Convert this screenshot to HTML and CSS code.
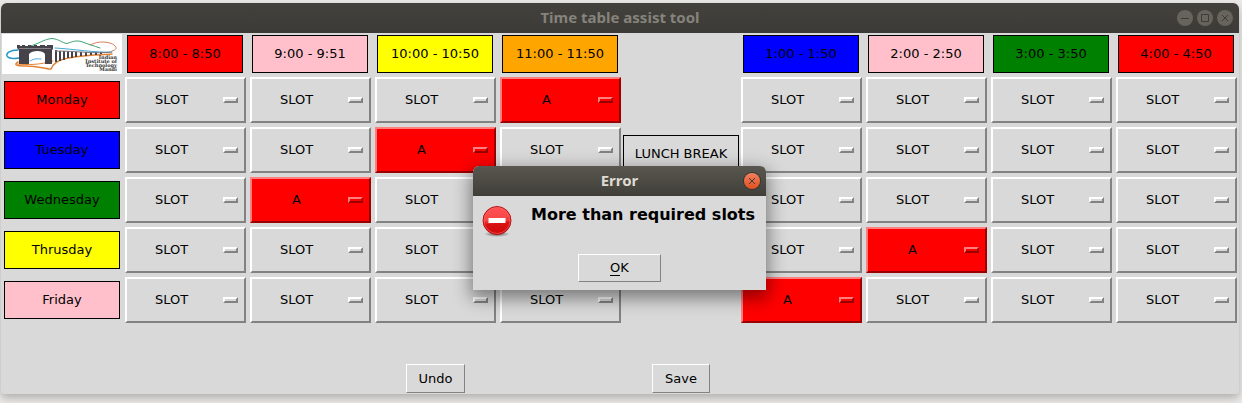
FILE: index.html
```html
<!DOCTYPE html>
<html lang="en">
<head>
<meta charset="utf-8">
<title>Time table assist tool</title>
<link rel="stylesheet" href="styles.css">
</head>
<body>
<main class="window">
  <header class="titlebar">
    <h1 class="title">Time table assist tool</h1>
    <div class="controls">
      <button class="control" aria-label="Minimize"><svg viewBox="0 0 16 16"><path d="M4 8.500h8"/></svg></button>
      <button class="control" aria-label="Maximize"><svg viewBox="0 0 16 16"><path d="M4.500 4.500h7v7h-7z"/></svg></button>
      <button class="control" aria-label="Close"><svg viewBox="0 0 16 16"><path d="M5 5l6 6M11 5l-6 6"/></svg></button>
    </div>
  </header>

  <table class="timetable">
    <colgroup><col class="col-day"><col span="4" class="col-slot"><col class="col-lunch"><col span="4" class="col-slot"></colgroup>
    <thead>
      <tr>
        <td class="logo-cell">
          <svg class="logo" viewBox="0 0 120 40" preserveAspectRatio="none" role="img" aria-label="Indian Institute of Technology Mandi">
            <rect width="120" height="40" fill="#fff"/>
            <g fill="none" stroke-linecap="round">
              <path d="M28 12C37 10 42 5 50 4.500C57 5 60 9 65 9.500C70 8 73 6 79 7.500C86 10 92 12 98 14" stroke="#3da374" stroke-width="1"/>
              <path d="M88 11C97 6 108 8 112 11C116 14 114 16 110 17" stroke="#d9805f" stroke-width="1"/>
              <path d="M16 16C8 16 4 19 5 22C6 24 11 25 17 24" stroke="#2496c8" stroke-width="1.500"/>
              <path d="M53 14C72 15 94 19 110 18M28 27C33 24 35 25 39 25" stroke="#48a8d3" stroke-width="1"/>
              <path d="M16 28C11 31 15 32 24 32C34 32 46 35 49 35C51 30 54 27 62 25C76 21 99 21 110 20" stroke="#e38435" stroke-width="1.500"/>
              <path d="M15 30C25 31 38 31 51 27" stroke="#e38435" stroke-width="1"/>
            </g>
            <path fill="#464249" d="M15 11h3v1h2v-1h3v1h3v-1h3v1h3v-1h3v1h3v-1h5v1h2v-1h6v4l-1 1v14H43V20c-2-4-13-4-16 0v10H17V16l-2-2z"/>
            <path d="M17 14.500h32" stroke="#88838a" stroke-width="1" fill="none"/>
            <path d="M54 16v12M58 17v10M62 17v9M66 17v7M70 18v6M74 18v5M79 18v4M84 18v4M89 18v3M94 18v3M99 18v2" stroke="#464249" stroke-width="2" fill="none"/>
            <path d="M53 17C75 17 94 20 110 18" stroke="#77747c" fill="none"/>
            <g class="logo-text" text-anchor="end"><text x="115" y="25">Indian</text><text x="115" y="29">Institute of</text><text x="115" y="33">Technology</text><text x="115" y="37">Mandi</text></g>
          </svg>
        </td>
        <th scope="col"><div class="tag red">8:00 - 8:50</div></th>
        <th scope="col"><div class="tag pink">9:00 - 9:51</div></th>
        <th scope="col"><div class="tag yellow">10:00 - 10:50</div></th>
        <th scope="col"><div class="tag orange">11:00 - 11:50</div></th>
        <td></td>
        <th scope="col"><div class="tag blue">1:00 - 1:50</div></th>
        <th scope="col"><div class="tag pink">2:00 - 2:50</div></th>
        <th scope="col"><div class="tag green">3:00 - 3:50</div></th>
        <th scope="col"><div class="tag red">4:00 - 4:50</div></th>
      </tr>
    </thead>
    <tbody>
      <tr>
        <th scope="row"><div class="tag red">Monday</div></th>
        <td><label class="slot"><select aria-label="Monday 8:00"><option>SLOT</option></select></label></td>
        <td><label class="slot"><select aria-label="Monday 9:00"><option>SLOT</option></select></label></td>
        <td><label class="slot"><select aria-label="Monday 10:00"><option>SLOT</option></select></label></td>
        <td><label class="slot taken"><select aria-label="Monday 11:00"><option>A</option></select></label></td>
        <td class="lunch" rowspan="5"><div class="tag">LUNCH BREAK</div></td>
        <td><label class="slot"><select aria-label="Monday 1:00"><option>SLOT</option></select></label></td>
        <td><label class="slot"><select aria-label="Monday 2:00"><option>SLOT</option></select></label></td>
        <td><label class="slot"><select aria-label="Monday 3:00"><option>SLOT</option></select></label></td>
        <td><label class="slot"><select aria-label="Monday 4:00"><option>SLOT</option></select></label></td>
      </tr>
      <tr>
        <th scope="row"><div class="tag blue">Tuesday</div></th>
        <td><label class="slot"><select aria-label="Tuesday 8:00"><option>SLOT</option></select></label></td>
        <td><label class="slot"><select aria-label="Tuesday 9:00"><option>SLOT</option></select></label></td>
        <td><label class="slot taken"><select aria-label="Tuesday 10:00"><option>A</option></select></label></td>
        <td><label class="slot"><select aria-label="Tuesday 11:00"><option>SLOT</option></select></label></td>
        <td><label class="slot"><select aria-label="Tuesday 1:00"><option>SLOT</option></select></label></td>
        <td><label class="slot"><select aria-label="Tuesday 2:00"><option>SLOT</option></select></label></td>
        <td><label class="slot"><select aria-label="Tuesday 3:00"><option>SLOT</option></select></label></td>
        <td><label class="slot"><select aria-label="Tuesday 4:00"><option>SLOT</option></select></label></td>
      </tr>
      <tr>
        <th scope="row"><div class="tag green">Wednesday</div></th>
        <td><label class="slot"><select aria-label="Wednesday 8:00"><option>SLOT</option></select></label></td>
        <td><label class="slot taken"><select aria-label="Wednesday 9:00"><option>A</option></select></label></td>
        <td><label class="slot"><select aria-label="Wednesday 10:00"><option>SLOT</option></select></label></td>
        <td><label class="slot"><select aria-label="Wednesday 11:00"><option>SLOT</option></select></label></td>
        <td><label class="slot"><select aria-label="Wednesday 1:00"><option>SLOT</option></select></label></td>
        <td><label class="slot"><select aria-label="Wednesday 2:00"><option>SLOT</option></select></label></td>
        <td><label class="slot"><select aria-label="Wednesday 3:00"><option>SLOT</option></select></label></td>
        <td><label class="slot"><select aria-label="Wednesday 4:00"><option>SLOT</option></select></label></td>
      </tr>
      <tr>
        <th scope="row"><div class="tag yellow">Thrusday</div></th>
        <td><label class="slot"><select aria-label="Thrusday 8:00"><option>SLOT</option></select></label></td>
        <td><label class="slot"><select aria-label="Thrusday 9:00"><option>SLOT</option></select></label></td>
        <td><label class="slot"><select aria-label="Thrusday 10:00"><option>SLOT</option></select></label></td>
        <td><label class="slot"><select aria-label="Thrusday 11:00"><option>SLOT</option></select></label></td>
        <td><label class="slot"><select aria-label="Thrusday 1:00"><option>SLOT</option></select></label></td>
        <td><label class="slot taken"><select aria-label="Thrusday 2:00"><option>A</option></select></label></td>
        <td><label class="slot"><select aria-label="Thrusday 3:00"><option>SLOT</option></select></label></td>
        <td><label class="slot"><select aria-label="Thrusday 4:00"><option>SLOT</option></select></label></td>
      </tr>
      <tr>
        <th scope="row"><div class="tag pink">Friday</div></th>
        <td><label class="slot"><select aria-label="Friday 8:00"><option>SLOT</option></select></label></td>
        <td><label class="slot"><select aria-label="Friday 9:00"><option>SLOT</option></select></label></td>
        <td><label class="slot"><select aria-label="Friday 10:00"><option>SLOT</option></select></label></td>
        <td><label class="slot"><select aria-label="Friday 11:00"><option>SLOT</option></select></label></td>
        <td><label class="slot taken"><select aria-label="Friday 1:00"><option>A</option></select></label></td>
        <td><label class="slot"><select aria-label="Friday 2:00"><option>SLOT</option></select></label></td>
        <td><label class="slot"><select aria-label="Friday 3:00"><option>SLOT</option></select></label></td>
        <td><label class="slot"><select aria-label="Friday 4:00"><option>SLOT</option></select></label></td>
      </tr>
    </tbody>
  </table>

  <footer class="actions">
    <button class="button undo">Undo</button>
    <button class="button save">Save</button>
  </footer>

  <section class="dialog" role="alertdialog" aria-labelledby="dialog-title" aria-describedby="dialog-message">
    <header class="dialog-bar">
      <h2 class="title" id="dialog-title">Error</h2>
      <button class="control close" aria-label="Close"><svg viewBox="0 0 16 16"><path d="M5 5l6 6M11 5l-6 6"/></svg></button>
    </header>
    <div class="dialog-body">
      <svg class="error-icon" viewBox="0 0 32 32" aria-hidden="true">
        <defs>
          <linearGradient id="disc" x1="0" y1="0" x2="0" y2="1"><stop offset="0" stop-color="#ff4a4a"/><stop offset=".5" stop-color="#f23a3a"/><stop offset=".55" stop-color="#dc1414"/><stop offset="1" stop-color="#cc0a0a"/></linearGradient>
          <radialGradient id="shade"><stop offset="0" stop-opacity=".6"/><stop offset="1" stop-opacity="0"/></radialGradient>
        </defs>
        <ellipse cx="16" cy="29" rx="13" ry="3" fill="url(#shade)"/>
        <circle cx="16" cy="15.500" r="14" fill="url(#disc)" stroke="#b01010"/>
        <circle cx="16" cy="15.500" r="13" fill="none" stroke="#f66" stroke-opacity=".6"/>
        <path d="M3 18C8 20 22 18 28 11C26 3 19 2 15 2.500C8 3 2 10 3 18z" fill="#ff6060" opacity=".35"/>
        <path d="M7.500 13h17v5h-17z" fill="#fff"/>
      </svg>
      <p class="message" id="dialog-message">More than required slots</p>
      <button class="button ok"><span class="mnemonic">O</span>K</button>
    </div>
  </section>
</main>
</body>
</html>
```

FILE: styles.css
```css
*, *::after { box-sizing: border-box; }

body {
  margin: 0;
  padding: 3px 3px 9px 1px;
  background: #eae9e7;
  color: #000;
  font: 13px/16px "DejaVu Sans", sans-serif;
}

button, select { font: inherit; color: inherit; }

.window {
  position: relative;
  background: #d9d9d9;
  border-radius: 6px 6px 4px 4px;
  box-shadow: 0 4px 8px rgba(0, 0, 0, .25);
}

.titlebar, .dialog-bar {
  display: grid;
  grid-template-columns: 1fr auto 1fr;
  align-items: center;
  height: 30px;
  padding: 0 6px;
  border-radius: 6px 6px 0 0;
}

.titlebar { background: linear-gradient(#42413c, #3c3b37); color: #85837c; }

.title {
  grid-column: 2;
  margin: 0;
  padding-bottom: 2px;
  font: bold 15px/20px "Noto Sans", sans-serif;
}

.controls { display: flex; justify-self: end; gap: 4px; }

.control {
  width: 16px;
  height: 16px;
  padding: 0;
  border: 0;
  border-radius: 50%;
  background: #66645d;
}

.control svg { display: block; fill: none; stroke: #3c3b37; stroke-width: 1; }

.timetable { width: 100%; table-layout: fixed; border-collapse: collapse; }

.col-day { width: 122px; }
.col-lunch { width: 116px; }

.timetable th, .timetable td { padding: 2px; font-weight: normal; }
.timetable tbody th { padding: 0 3px; }
.timetable thead th { padding: 2px 5px 2px 4px; }
.timetable .logo-cell { padding: 0 1px; }
.timetable .lunch { padding: 60px 0 0; vertical-align: top; }

.logo { display: block; width: 100%; height: 40px; }
.logo-text { fill: #333; font: bold 5px "DejaVu Serif", serif; }

.tag {
  display: flex;
  align-items: center;
  justify-content: center;
  height: 38px;
  border: 1px solid #000;
}

.red { background: #f00; }
.pink { background: #ffc0cb; }
.yellow { background: #ff0; }
.orange { background: #ffa500; }
.blue { background: #00f; }
.green { background: #008000; }

.slot {
  --bevel: #fff #828282 #828282 #fff;
  --face: #d9d9d9;
  position: relative;
  display: block;
}

.slot.taken { --bevel: #ff7f7f #990000 #990000 #ff7f7f; --face: #f00; }

.slot select {
  display: block;
  width: 100%;
  height: 46px;
  padding: 0 28px 0 0;
  border: 2px solid;
  border-color: var(--bevel);
  border-radius: 0;
  background: var(--face);
  appearance: none;
  text-align: center;
  text-align-last: center;
}

.slot::after {
  content: "";
  position: absolute;
  top: 20px;
  right: 8px;
  width: 15px;
  height: 6px;
  border: 2px solid;
  border-color: var(--bevel);
  pointer-events: none;
}

.actions {
  display: grid;
  grid-template-columns: 122fr repeat(4, 125fr) 116fr repeat(4, 125fr);
  justify-items: center;
  padding: 39px 0 1px;
}

.button {
  height: 29px;
  padding: 0 12px;
  border: 1px solid;
  border-color: #fff #828282 #828282 #fff;
  background: #d9d9d9;
}

.undo { grid-column: 4; }
.save { grid-column: 6; }

.dialog {
  position: absolute;
  top: 163px;
  left: calc(50% - 147px);
  width: 293px;
  border-radius: 6px 6px 0 0;
  background: #d9d9d9;
  box-shadow: 0 6px 18px 2px rgba(0, 0, 0, .45);
}

.dialog-bar { background: linear-gradient(#59574f, #3f3e39); color: #dfdbd2; }

.close { justify-self: end; background: linear-gradient(#f38160, #e2501f); box-shadow: 0 0 0 1px #35342f; }

.dialog-body {
  display: grid;
  grid-template-columns: 32px 1fr;
  column-gap: 18px;
  padding: 8px;
}

.error-icon { width: 32px; height: 34px; }

.message { margin: 0; font-weight: bold; font-size: 16px; line-height: 22px; white-space: nowrap; }

.ok { grid-column: 1 / -1; justify-self: center; width: 83px; height: 28px; margin-top: 16px; }

.mnemonic { display: inline-block; border-bottom: 1px solid #000; line-height: 15px; }
```
